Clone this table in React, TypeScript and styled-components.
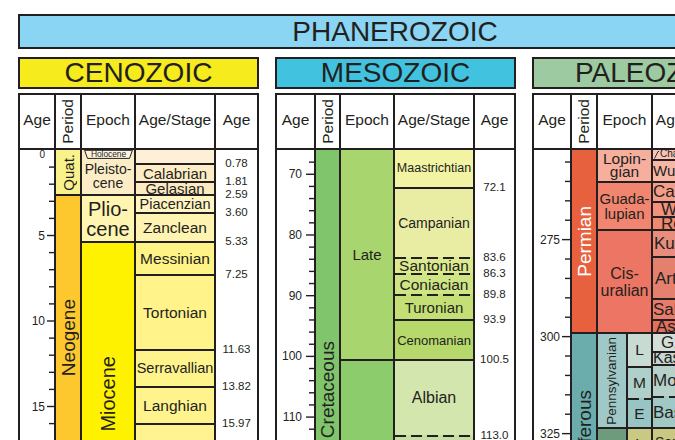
import React from 'react'
import styled, { createGlobalStyle, css } from 'styled-components'

const INK = '#231f20'
const FONT = '"Liberation Sans", Arial, Helvetica, sans-serif'

const GlobalStyle = createGlobalStyle`
  html, body {
    margin: 0;
    padding: 0;
    background: #fff;
    overflow: hidden;
  }
  body {
    font-family: ${FONT};
    color: ${INK};
  }
`

type Unit = {
  from: number
  to: number
  bg: string
  name?: string
  fs?: number
  lh?: number
  vertical?: boolean
  ink?: string
  dashed?: boolean
  offset?: number
  dy?: number
  pad?: number
  tab?: boolean
  band?: Unit
  parts?: Unit[]
}

type Axis = {
  step: number
  major: number
  w: number
  labelX: number
  majorX: number
  minorX: number
}

type Era = {
  title: string
  bg: string
  cols: string
  t0: number
  t1: number
  k: number
  axis: Axis
  period: Unit[]
  epoch: Unit[]
  stage: Unit[]
  ages: string[]
  holocene?: boolean
}

const Page = styled.div`
  display: flex;
  flex-direction: column;
  gap: 8px;
  width: max-content;
  padding: 14px 0 0 18px;
`

const EonBar = styled.div`
  box-sizing: border-box;
  width: 754px;
  height: 35px;
  border: 2px solid ${INK};
  background: #8ad5f3;
  font-size: 28px;
  line-height: 31px;
  text-align: center;
`

const EraRow = styled.div`
  display: flex;
  gap: 16px;
  align-items: flex-start;
`

const EraPanel = styled.section`
  display: flex;
  flex-direction: column;
  gap: 4px;
  flex-shrink: 0;
`

const EraBar = styled.div<{ $bg: string }>`
  box-sizing: border-box;
  height: 32px;
  border: 2px solid ${INK};
  background: ${p => p.$bg};
  font-size: 28px;
  line-height: 28px;
  text-align: center;
  white-space: nowrap;
  overflow: hidden;
`

const Table = styled.div<{ $cols: string }>`
  display: grid;
  grid-template-columns: ${p => p.$cols};
  border: 2px solid ${INK};
  background: #fff;
`

const HeadCell = styled.div<{ $last?: boolean }>`
  box-sizing: border-box;
  height: 55px;
  padding-bottom: 4px;
  border-bottom: 2px solid ${INK};
  ${p => !p.$last && css`border-right: 2px solid ${INK};`}
  display: flex;
  align-items: center;
  justify-content: center;
  font-size: 15.5px;
  white-space: nowrap;
  overflow: hidden;
`

const PeriodHead = styled(HeadCell)`
  padding-bottom: 1px;
`

const Column = styled.div<{ $last?: boolean }>`
  position: relative;
  box-sizing: border-box;
  display: flex;
  flex-direction: column;
  ${p => !p.$last && css`border-right: 2px solid ${INK};`}
`

const dashes = `repeating-linear-gradient(90deg, ${INK} 0 11px, transparent 11px 16px) 0 0 / 100% 2px no-repeat`

const Block = styled.div<{
  $bg: string
  $dashed?: boolean
  $offset?: number
  $dy?: number
  $pad?: number
  $split?: boolean
}>`
  box-sizing: border-box;
  flex-shrink: 0;
  overflow: hidden;
  display: flex;
  align-items: ${p => (p.$split ? 'stretch' : p.$offset ? 'flex-start' : 'center')};
  justify-content: ${p => (p.$pad !== undefined ? 'flex-start' : 'center')};
  text-align: center;
  border-top: 2px solid ${p => (p.$dashed ? 'transparent' : INK)};
  background: ${p => (p.$dashed ? `${dashes}, ${p.$bg}` : p.$bg)};
  background-origin: border-box;
  padding-top: ${p => p.$offset ?? p.$dy ?? 0}px;
  padding-left: ${p => p.$pad ?? 0}px;
  &:first-child {
    border-top: none;
  }
`

const Band = styled.div<{ $bg: string }>`
  box-sizing: border-box;
  width: 30px;
  flex-shrink: 0;
  display: flex;
  align-items: center;
  justify-content: center;
  overflow: hidden;
  background: ${p => p.$bg};
  border-right: 2px solid ${INK};
`

const Stack = styled.div`
  flex: 1;
  display: flex;
  flex-direction: column;
  min-width: 0;
`

const Label = styled.span<{ $fs: number; $lh?: number; $vertical?: boolean; $ink?: string }>`
  font-size: ${p => p.$fs}px;
  line-height: ${p => (p.$lh ? `${p.$lh}px` : 1)};
  color: ${p => p.$ink ?? INK};
  white-space: pre;
  ${p =>
    p.$vertical &&
    css`
      writing-mode: vertical-rl;
      transform: rotate(180deg);
    `}
`

const Slot = styled.div`
  flex-shrink: 0;
  display: flex;
  align-items: flex-end;
  justify-content: center;
`

const AgeText = styled.span`
  font-size: 11.5px;
  line-height: 12px;
  transform: translateY(50%);
  white-space: nowrap;
`

const Tab = styled.div`
  position: absolute;
  top: 0;
  left: 2px;
  width: 49px;
  height: 9px;
  display: flex;
  align-items: center;
  justify-content: center;
  font-size: 8.5px;
  line-height: 1;
  letter-spacing: -0.1px;
  & > svg {
    position: absolute;
    inset: 0;
  }
  & > span {
    position: relative;
  }
`

const Slash = styled.svg`
  flex-shrink: 0;
  margin-right: 1px;
`

const cenozoic: Era = {
  title: 'CENOZOIC',
  bg: '#f5eb1d',
  cols: '36px 26px 54px 80px 41px',
  t0: 0,
  t1: 23.03,
  k: 17.1,
  axis: { step: 1, major: 5, w: 34, labelX: 25, majorX: 27, minorX: 29 },
  holocene: true,
  period: [
    { from: 0, to: 2.59, bg: '#f9f28c', name: 'Quat.', fs: 15, vertical: true },
    { from: 2.59, to: 23.03, bg: '#fcc82e', name: 'Neogene', fs: 19, vertical: true, offset: 103 },
  ],
  epoch: [
    { from: 0, to: 2.59, bg: '#fdedc7', name: 'Pleisto-\ncene', fs: 14, lh: 14, dy: 8 },
    { from: 2.59, to: 5.33, bg: '#fff5b0', name: 'Plio-\ncene', fs: 20, lh: 20 },
    { from: 5.33, to: 23.03, bg: '#fff200', name: 'Miocene', fs: 20, vertical: true },
  ],
  stage: [
    { from: 0, to: 0.78, bg: '#fdf0d6' },
    { from: 0.78, to: 1.81, bg: '#fdecc5', name: 'Calabrian', fs: 15 },
    { from: 1.81, to: 2.59, bg: '#fdeac0', name: 'Gelasian', fs: 15 },
    { from: 2.59, to: 3.6, bg: '#fff4c2', name: 'Piacenzian', fs: 14.5 },
    { from: 3.6, to: 5.33, bg: '#fff3b2', name: 'Zanclean', fs: 15.5 },
    { from: 5.33, to: 7.25, bg: '#fff385', name: 'Messinian', fs: 15.5 },
    { from: 7.25, to: 11.63, bg: '#fff38a', name: 'Tortonian', fs: 15.5 },
    { from: 11.63, to: 13.82, bg: '#fff38c', name: 'Serravallian', fs: 14.5 },
    { from: 13.82, to: 15.97, bg: '#fff38e', name: 'Langhian', fs: 15.5 },
    { from: 15.97, to: 20.44, bg: '#fff290', name: 'Burdigalian', fs: 15 },
    { from: 20.44, to: 23.03, bg: '#fff29a', name: 'Aquitanian', fs: 15 },
  ],
  ages: ['0.78', '1.81', '2.59', '3.60', '5.33', '7.25', '11.63', '13.82', '15.97', '20.44'],
}

const mesozoic: Era = {
  title: 'MESOZOIC',
  bg: '#41c3df',
  cols: '39px 25px 54px 80px 39px',
  t0: 66,
  t1: 145,
  k: 6.07,
  axis: { step: 2, major: 10, w: 37, labelX: 25, majorX: 29, minorX: 32 },
  period: [{ from: 66, to: 145, bg: '#80c56b', name: 'Cretaceous', fs: 19, vertical: true }],
  epoch: [
    { from: 66, to: 100.5, bg: '#a8d56e', name: 'Late', fs: 15 },
    { from: 100.5, to: 145, bg: '#8dcc6c', name: 'Early', fs: 15 },
  ],
  stage: [
    { from: 66, to: 72.1, bg: '#f2f4a4', name: 'Maastrichtian', fs: 12.5 },
    { from: 72.1, to: 83.6, bg: '#e9eda4', name: 'Campanian', fs: 14 },
    { from: 83.6, to: 86.3, bg: '#dbea8e', name: 'Santonian', fs: 15.5, dashed: true },
    { from: 86.3, to: 89.8, bg: '#cfe584', name: 'Coniacian', fs: 15.5, dashed: true },
    { from: 89.8, to: 93.9, bg: '#c3df75', name: 'Turonian', fs: 15, dashed: true },
    { from: 93.9, to: 100.5, bg: '#b7d86b', name: 'Cenomanian', fs: 13 },
    { from: 100.5, to: 113.0, bg: '#d3e6ae', name: 'Albian', fs: 16 },
    { from: 113.0, to: 125.0, bg: '#c6dfa0', name: 'Aptian', fs: 16, dashed: true },
    { from: 125.0, to: 129.4, bg: '#b9da93', name: 'Barremian', fs: 13 },
    { from: 129.4, to: 132.9, bg: '#acd488', name: 'Hauterivian', fs: 12 },
    { from: 132.9, to: 139.8, bg: '#a0ce7f', name: 'Valanginian', fs: 13 },
    { from: 139.8, to: 145, bg: '#94c877', name: 'Berriasian', fs: 13 },
  ],
  ages: ['72.1', '83.6', '86.3', '89.8', '93.9', '100.5', '113.0', '125.0', '129.4', '132.9', '139.8'],
}

const paleozoic: Era = {
  title: 'PALEOZOIC',
  bg: '#9ecaa2',
  cols: '38px 26px 55px 80px 41px',
  t0: 251.9,
  t1: 358.9,
  k: 3.88,
  axis: { step: 5, major: 25, w: 36, labelX: 26, majorX: 28, minorX: 31 },
  period: [
    { from: 251.9, to: 298.9, bg: '#e8613f', name: 'Permian', fs: 19, vertical: true, ink: '#fff' },
    { from: 298.9, to: 358.9, bg: '#6aadac', name: 'Carboniferous', fs: 19, vertical: true },
  ],
  epoch: [
    { from: 251.9, to: 259.8, bg: '#f7af9d', name: 'Lopin-\ngian', fs: 15.5, lh: 13.5 },
    { from: 259.8, to: 272.3, bg: '#f1856f', name: 'Guada-\nlupian', fs: 15, lh: 15 },
    { from: 272.3, to: 298.9, bg: '#ec7663', name: 'Cis-\nuralian', fs: 16, lh: 17 },
    {
      from: 298.9,
      to: 323.2,
      bg: '#a0c8c7',
      band: { from: 298.9, to: 323.2, bg: '#a0c8c7', name: 'Pennsylvanian', fs: 13.5, vertical: true },
      parts: [
        { from: 298.9, to: 307.0, bg: '#c8dbd2', name: 'L', fs: 15.5 },
        { from: 307.0, to: 315.2, bg: '#afcfca', name: 'M', fs: 15.5 },
        { from: 315.2, to: 323.2, bg: '#98c5c4', name: 'E', fs: 15.5, dashed: true },
      ],
    },
    {
      from: 323.2,
      to: 358.9,
      bg: '#6e9b7c',
      band: { from: 323.2, to: 358.9, bg: '#6e9b7c', name: 'Mississippian', fs: 13.5, vertical: true },
      parts: [
        { from: 323.2, to: 330.9, bg: '#c9c983', name: 'L', fs: 15.5 },
        { from: 330.9, to: 346.7, bg: '#b3be72', name: 'M', fs: 15.5 },
        { from: 346.7, to: 358.9, bg: '#9db36a', name: 'E', fs: 15.5 },
      ],
    },
  ],
  stage: [
    { from: 251.9, to: 254.1, bg: '#f9c3b5', name: 'Changhsingian', fs: 10, pad: 1, tab: true },
    { from: 254.1, to: 259.8, bg: '#f8b6a5', name: 'Wuchiapingian', fs: 15, pad: 0 },
    { from: 259.8, to: 265.1, bg: '#f49d88', name: 'Capitanian', fs: 17, pad: 0 },
    { from: 265.1, to: 268.8, bg: '#f2927c', name: 'Wordian', fs: 17, pad: 8 },
    { from: 268.8, to: 272.3, bg: '#f0886f', name: 'Roadian', fs: 17, pad: 8 },
    { from: 272.3, to: 279.3, bg: '#e88d7c', name: 'Kungurian', fs: 17, pad: 1 },
    { from: 279.3, to: 290.1, bg: '#e4806e', name: 'Artinskian', fs: 17, pad: 2 },
    { from: 290.1, to: 295.5, bg: '#e67c69', name: 'Sakmarian', fs: 17, pad: 0 },
    { from: 295.5, to: 298.9, bg: '#e36f5e', name: 'Asselian', fs: 17, pad: 3 },
    { from: 298.9, to: 303.7, bg: '#d4ded8', name: 'Gzhelian', fs: 17, pad: 8 },
    { from: 303.7, to: 307.0, bg: '#c6d7cf', name: 'Kasimovian', fs: 16, pad: 0 },
    { from: 307.0, to: 315.2, bg: '#b6d0ca', name: 'Moscovian', fs: 17, pad: 0 },
    { from: 315.2, to: 323.2, bg: '#a0c8c5', name: 'Bashkirian', fs: 17, pad: 0, dashed: true },
    { from: 323.2, to: 330.9, bg: '#c9c882', name: 'Serpukhovian', fs: 14, pad: 2 },
    { from: 330.9, to: 346.7, bg: '#b8bf6f', name: 'Visean', fs: 17, pad: 4 },
    { from: 346.7, to: 358.9, bg: '#a2b466', name: 'Tournaisian', fs: 15, pad: 1 },
  ],
  ages: ['254.1', '259.8', '265.1', '268.8', '272.3', '279.3', '290.1', '295.5', '298.9', '303.7', '307.0', '315.2', '323.2', '330.9', '346.7'],
}

function unitLabel(u: Unit) {
  if (!u.name) return null
  return (
    <Label $fs={u.fs ?? 15} $lh={u.lh} $vertical={u.vertical} $ink={u.ink}>
      {u.name}
    </Label>
  )
}

function Units({ units, k }: { units: Unit[]; k: number }) {
  return (
    <>
      {units.map((u, i) => (
        <Block
          key={i}
          style={{ height: (u.to - u.from) * k }}
          $bg={u.bg}
          $dashed={u.dashed}
          $offset={u.offset}
          $dy={u.dy}
          $pad={u.pad}
          $split={!!u.band}
        >
          {u.band && u.parts ? (
            <>
              <Band $bg={u.band.bg}>{unitLabel(u.band)}</Band>
              <Stack>
                <Units units={u.parts} k={k} />
              </Stack>
            </>
          ) : (
            <>
              {u.tab && (
                <Slash width="5" height="9" viewBox="0 0 5 9">
                  <path d="M0.5 8.5 L4 1.5 L5 1.5" stroke={INK} strokeWidth="0.9" fill="none" />
                </Slash>
              )}
              {unitLabel(u)}
            </>
          )}
        </Block>
      ))}
    </>
  )
}

function TickAxis({ era }: { era: Era }) {
  const { t0, t1, k, axis } = era
  const h = (t1 - t0) * k
  const first = Math.ceil(t0 / axis.step - 1e-9)
  const last = Math.floor(t1 / axis.step + 1e-9)
  const marks = []
  for (let n = first; n <= last; n++) {
    const t = n * axis.step
    const y = (t - t0) * k
    const isMajor = t % axis.major === 0
    if (y >= 1) {
      marks.push(
        <line
          key={`l${n}`}
          x1={isMajor ? axis.majorX : axis.minorX}
          x2={axis.w}
          y1={y}
          y2={y}
          stroke={INK}
          strokeWidth="1.4"
        />,
      )
    }
    if (isMajor) {
      const top = y < 6
      marks.push(
        <text
          key={`t${n}`}
          x={axis.labelX}
          y={top ? 4 : y}
          textAnchor="end"
          dominantBaseline="central"
          fontFamily={FONT}
          fontSize={top ? 10 : 12}
          fill={INK}
        >
          {t}
        </text>,
      )
    }
  }
  return (
    <svg width={axis.w} height={h} style={{ display: 'block' }}>
      {marks}
    </svg>
  )
}

function AgeMarks({ era }: { era: Era }) {
  let prev = era.t0
  const slots = era.ages.map((a, i) => {
    const t = parseFloat(a)
    const h = (t - prev) * era.k
    prev = t
    return (
      <Slot key={i} style={{ height: h }}>
        <AgeText>{a}</AgeText>
      </Slot>
    )
  })
  slots.push(<Slot key="end" style={{ height: (era.t1 - prev) * era.k }} />)
  return <>{slots}</>
}

function HoloceneTab() {
  return (
    <Tab>
      <svg width="49" height="9" viewBox="0 0 49 9">
        <polygon points="0.6,0.3 48.4,0.3 45.5,8.4 3.5,8.4" fill="#fdf4e2" stroke={INK} strokeWidth="1" />
      </svg>
      <span>Holocene</span>
    </Tab>
  )
}

function EraTable({ era }: { era: Era }) {
  return (
    <EraPanel>
      <EraBar $bg={era.bg}>{era.title}</EraBar>
      <Table $cols={era.cols}>
        <HeadCell>Age</HeadCell>
        <PeriodHead>
          <Label $fs={15.5} $vertical>
            Period
          </Label>
        </PeriodHead>
        <HeadCell>Epoch</HeadCell>
        <HeadCell>Age/Stage</HeadCell>
        <HeadCell $last>Age</HeadCell>

        <Column>
          <TickAxis era={era} />
        </Column>
        <Column>
          <Units units={era.period} k={era.k} />
        </Column>
        <Column>
          <Units units={era.epoch} k={era.k} />
          {era.holocene && <HoloceneTab />}
        </Column>
        <Column>
          <Units units={era.stage} k={era.k} />
        </Column>
        <Column $last>
          <AgeMarks era={era} />
        </Column>
      </Table>
    </EraPanel>
  )
}

export default function App() {
  return (
    <>
      <GlobalStyle />
      <Page>
        <EonBar>PHANEROZOIC</EonBar>
        <EraRow>
          <EraTable era={cenozoic} />
          <EraTable era={mesozoic} />
          <EraTable era={paleozoic} />
        </EraRow>
      </Page>
    </>
  )
}
